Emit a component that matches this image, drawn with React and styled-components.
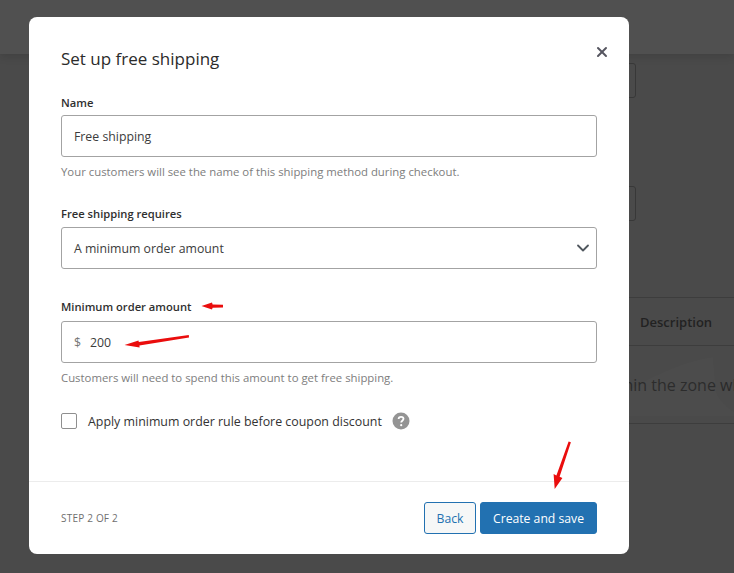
import React from 'react';
import styled, { createGlobalStyle } from 'styled-components';
import { X, ChevronDown } from 'lucide-react';

const GlobalStyle = createGlobalStyle`
  html, body {
    margin: 0;
    padding: 0;
    height: 100%;
    background: #4a4a4a;
    overflow: hidden;
  }
  * { box-sizing: border-box; }
  body {
    font-family: "Open Sans", "Noto Sans", "Liberation Sans", sans-serif;
  }
`;

// page behind the dialog
const Page = styled.div`
  position: relative;
  width: 734px;
  height: 573px;
  overflow: hidden;
  background: #4a4a4a;
`;

const TopBar = styled.div`
  height: 54px;
  background: #505050;
  box-shadow: 0 3px 8px rgba(0, 0, 0, 0.12);
`;

const BackColumn = styled.div`
  margin-left: 100px;
  padding-top: 9px;
`;

const BackInput = styled.div`
  width: 536px;
  height: 35px;
  margin-bottom: ${(p) => p.$gap || 0}px;
  border: 1px solid #383838;
  border-radius: 3px;
`;

const BackRow = styled.div`
  width: 700px;
  height: ${(p) => p.$h}px;
  padding-left: ${(p) => p.$indent}px;
  display: flex;
  align-items: center;
  white-space: nowrap;
  border-bottom: 1px solid #3d3d3d;
  color: ${(p) => p.$color};
  font-size: ${(p) => p.$size}px;
  font-weight: ${(p) => p.$weight || 400};
  border-top: ${(p) => (p.$top ? '1px solid #3d3d3d' : 'none')};
`;

const BackShape = styled.svg`
  position: absolute;
  left: 629px;
  top: 346px;
`;

// dialog
const Modal = styled.div`
  position: absolute;
  left: 29px;
  top: 17px;
  width: 600px;
  height: 537px;
  display: flex;
  flex-direction: column;
  background: #fff;
  border-radius: 8px;
`;

const ModalBody = styled.div`
  position: relative;
  flex: 1;
  padding: 30px 32px 0;
`;

const Title = styled.h1`
  margin: 0 0 23px;
  font-size: 17px;
  line-height: 24px;
  font-weight: 400;
  color: #2b2b2b;
`;

const CloseButton = styled.button`
  position: absolute;
  top: 27px;
  right: 19px;
  width: 16px;
  height: 16px;
  padding: 0;
  border: 0;
  background: none;
  color: #55555f;
  display: flex;
  align-items: center;
  justify-content: center;
`;

const Field = styled.div`
  margin-bottom: ${(p) => p.$gap}px;
`;

const Label = styled.div`
  height: 18px;
  margin-bottom: ${(p) => p.$gap}px;
  font-size: 11.2px;
  line-height: 18px;
  font-weight: 600;
  color: #2f2f2f;
`;

const InputBox = styled.div`
  height: 42px;
  padding: 0 ${(p) => (p.$select ? 3 : 12)}px 0 12px;
  display: flex;
  align-items: center;
  justify-content: ${(p) => (p.$select ? 'space-between' : 'flex-start')};
  border: 1px solid #a3a3a3;
  border-radius: 3px;
  font-size: 12.3px;
  color: #3c3c3c;
`;

const Prefix = styled.span`
  margin-right: 9px;
  color: #757575;
`;

const Help = styled.div`
  margin-top: 6px;
  font-size: 11.37px;
  line-height: 18px;
  color: #7d7d7d;
`;

const CheckRow = styled.div`
  display: flex;
  align-items: center;
  height: 20px;
  font-size: 12.4px;
  color: #333;
`;

const CheckBox = styled.span`
  width: 16px;
  height: 16px;
  margin-right: 11px;
  border: 1px solid #8f8f8f;
  border-radius: 2px;
`;

const HelpIcon = styled.svg`
  margin-left: 10px;
`;

const Footer = styled.div`
  height: 73px;
  padding: 0 32px;
  display: flex;
  align-items: center;
  justify-content: space-between;
  border-top: 1px solid #ececec;
`;

const Step = styled.div`
  font-size: 10px;
  color: #6f6f6f;
  letter-spacing: 0.2px;
`;

const Actions = styled.div`
  display: flex;
  gap: 4px;
`;

const Button = styled.button`
  height: 32px;
  padding: 0;
  width: ${(p) => p.$w}px;
  border: 1px solid #2271b1;
  border-radius: 3px;
  font-family: inherit;
  font-size: 12.2px;
  background: ${(p) => (p.$primary ? '#2271b1' : '#f6f7f7')};
  color: ${(p) => (p.$primary ? '#fff' : '#2271b1')};
`;

const Arrows = styled.svg`
  position: absolute;
  left: 0;
  top: 0;
  pointer-events: none;
`;

export default function App() {
  return (
    <Page>
      <GlobalStyle />
      <TopBar />
      <BackColumn>
        <BackInput $gap={88} />
        <BackInput $gap={76} />
        <BackRow $h={49} $indent={540} $size={13} $weight={600} $color="#222" $top>
          Description
        </BackRow>
        <BackRow $h={78} $indent={499} $size={16} $color="#2a2a2a">
          Within the zone where customers are
        </BackRow>
      </BackColumn>
      <BackShape width="105" height="70" viewBox="0 0 105 70">
        <path d="M0 44 C30 26 60 14 84 11 L87 46 C90 54 98 62 105 66 L105 76 L0 76 Z" fill="#ffffff" fillOpacity="0.012" />
      </BackShape>

      <Modal>
        <ModalBody>
          <Title>Set up free shipping</Title>
          <CloseButton aria-label="Close">
            <X size={18} strokeWidth={3} />
          </CloseButton>

          <Field $gap={24}>
            <Label $gap={3}>Name</Label>
            <InputBox>Free shipping</InputBox>
            <Help>Your customers will see the name of this shipping method during checkout.</Help>
          </Field>

          <Field $gap={29}>
            <Label $gap={4}>Free shipping requires</Label>
            <InputBox $select>
              A minimum order amount
              <ChevronDown size={20} strokeWidth={2.2} color="#50575e" />
            </InputBox>
          </Field>

          <Field $gap={24}>
            <Label $gap={5}>Minimum order amount</Label>
            <InputBox>
              <Prefix>$</Prefix>200
            </InputBox>
            <Help>Customers will need to spend this amount to get free shipping.</Help>
          </Field>

          <CheckRow>
            <CheckBox />
            Apply minimum order rule before coupon discount
            <HelpIcon width="18" height="18" viewBox="0 0 18 18">
              <circle cx="9" cy="9" r="8.5" fill="#949494" />
              <path
                d="M6.6 7.1c0-1.4 1-2.3 2.5-2.3s2.4.8 2.4 2c0 1.9-2.3 1.9-2.3 3.7"
                fill="none"
                stroke="#fff"
                strokeWidth="1.8"
              />
              <circle cx="9.2" cy="13.2" r="1.1" fill="#fff" />
            </HelpIcon>
          </CheckRow>
        </ModalBody>

        <Footer>
          <Step>STEP 2 OF 2</Step>
          <Actions>
            <Button $w={52}>Back</Button>
            <Button $w={117} $primary>Create and save</Button>
          </Actions>
        </Footer>
      </Modal>

      <Arrows width="734" height="573" viewBox="0 0 734 573">
        <path d="M201.5 306 L212 302.6 L212.6 304.6 L223 304.8 L223 307.4 L212.6 307.8 L212 309.6 Z" fill="#ea0d0d" />
        <path d="M124.5 345 L138.5 340.4 L138.8 342 L188.8 335 L189 337.6 L139.4 345.4 L139.6 347.6 Z" fill="#ea0d0d" />
        <path d="M554.7 489 L553.6 474 L556.4 475.4 L568.6 441.4 L570.9 442.2 L559.6 476.8 L562.4 478 Z" fill="#ea0d0d" />
      </Arrows>
    </Page>
  );
}
